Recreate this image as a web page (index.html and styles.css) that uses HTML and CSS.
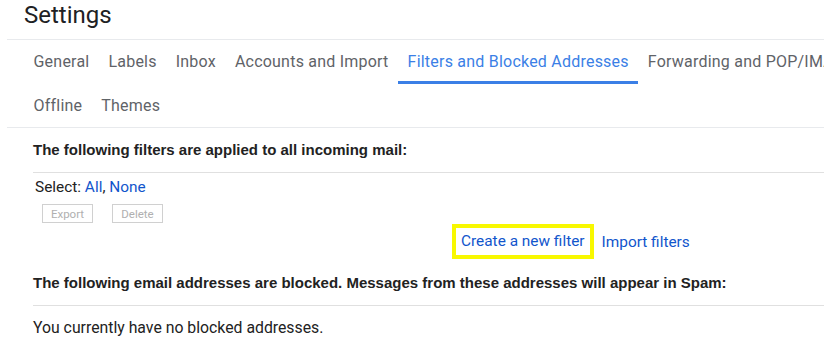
FILE: index.html
```html
<!DOCTYPE html>
<html lang="en">
<head>
    <meta charset="UTF-8">
    <meta name="viewport" content="width=device-width, initial-scale=1.0">
    <title>Settings</title>
    <link rel="stylesheet" href="styles.css">
</head>
<body>
    <h1 class="title">Settings</h1>
    <div class="tabs-wrap">
        <div class="tabs">
            <a class="tab">General</a>
            <a class="tab">Labels</a>
            <a class="tab">Inbox</a>
            <a class="tab">Accounts and Import</a>
            <a class="tab active">Filters and Blocked Addresses</a>
            <a class="tab">Forwarding and POP/IMAP</a>
            <span class="tab-break"></span>
            <a class="tab">Offline</a>
            <a class="tab">Themes</a>
        </div>
    </div>

    <div class="content">
        <div class="section-head">The following filters are applied to all incoming mail:</div>
        <div class="select-row">Select: <a class="link">All</a>, <a class="link">None</a></div>
        <div class="btn-row">
            <button class="btn" disabled>Export</button>
            <button class="btn" disabled>Delete</button>
        </div>
        <div class="filter-actions">
            <a class="link highlight">Create a new filter</a>
            <a class="link">Import filters</a>
        </div>

        <div class="section-head">The following email addresses are blocked. Messages from these addresses will appear in Spam:</div>
        <p class="empty">You currently have no blocked addresses.</p>
    </div>
</body>
</html>
```

FILE: styles.css
```css
body {
    margin: 0;
    font-family: Roboto, "Liberation Sans", Arial, sans-serif;
    color: #222;
    overflow: hidden;
    background: #fff;
}

.title {
    margin: 0 0 0 7px;
    height: 39px;
    padding-left: 17px;
    font-size: 24px;
    font-weight: 400;
    line-height: 30px;
    color: #202124;
    border-bottom: 1px solid #e8eaed;
}

.tabs-wrap {
    margin-left: 7px;
    border-bottom: 1px solid #e8eaed;
}

.tabs {
    width: 1100px;
    padding-left: 17px;
    display: flex;
    flex-wrap: wrap;
}

.tab-break {
    flex-basis: 100%;
    height: 0;
}

.tab {
    height: 44px;
    line-height: 44px;
    padding: 0 9.5px;
    font-size: 16px;
    letter-spacing: 0.22px;
    color: #5f6368;
    box-sizing: border-box;
    white-space: nowrap;
}
.tab-break ~ .tab {
    height: 43px;
    line-height: 43px;
}
.tab.active {
    color: #3b7fe6;
    border-bottom: 3px solid #3b7fe6;
}

.content {
    margin-left: 33px;
}

.section-head {
    padding: 13px 0 14px;
    line-height: 17px;
    font-family: "Liberation Sans", Arial, sans-serif;
    font-size: 15px;
    font-weight: bold;
    color: #222;
    border-bottom: 1px solid #e0e0e0;
    white-space: nowrap;
}

.select-row {
    padding: 6px 0 0 2px;
    font-size: 15.4px;
    line-height: 16px;
}

.link {
    color: #15c;
    cursor: pointer;
}

.btn-row {
    display: flex;
    gap: 19px;
    padding: 9px 0 0 9px;
}

.btn {
    width: 51px;
    height: 19px;
    padding: 0;
    border: 1px solid #d0d0d0;
    background: #fff;
    color: #b0b0b0;
    font-family: Roboto, "Liberation Sans", Arial, sans-serif;
    font-size: 11.5px;
}

.filter-actions {
    display: flex;
    align-items: center;
    gap: 8px;
    padding: 1px 0 2px 419px;
    font-size: 15.4px;
}

.highlight {
    border: 4px solid #f8f800;
    padding: 5px;
    line-height: 17px;
}

.empty {
    margin: 0;
    padding-top: 13px;
    font-size: 15.8px;
    line-height: 17px;
}
```
